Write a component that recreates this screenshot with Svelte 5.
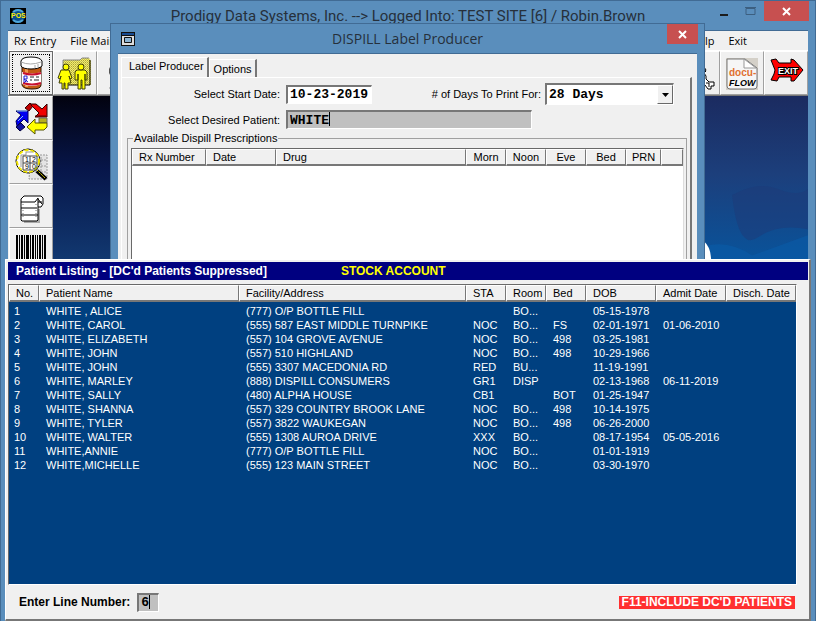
<script lang="ts">
	type Patient = {
		name: string;
		address: string;
		sta?: string;
		room?: string;
		bed?: string;
		dob: string;
		admit?: string;
	};

	const patients: Patient[] = [
		{ name: 'WHITE , ALICE', address: '(777) O/P BOTTLE FILL', room: 'BO...', dob: '05-15-1978' },
		{ name: 'WHITE, CAROL', address: '(555) 587 EAST MIDDLE TURNPIKE', sta: 'NOC', room: 'BO...', bed: 'FS', dob: '02-01-1971', admit: '01-06-2010' },
		{ name: 'WHITE, ELIZABETH', address: '(557) 104 GROVE AVENUE', sta: 'NOC', room: 'BO...', bed: '498', dob: '03-25-1981' },
		{ name: 'WHITE, JOHN', address: '(557) 510 HIGHLAND', sta: 'NOC', room: 'BO...', bed: '498', dob: '10-29-1966' },
		{ name: 'WHITE, JOHN', address: '(555) 3307 MACEDONIA RD', sta: 'RED', room: 'BU...', dob: '11-19-1991' },
		{ name: 'WHITE, MARLEY', address: '(888) DISPILL CONSUMERS', sta: 'GR1', room: 'DISP', dob: '02-13-1968', admit: '06-11-2019' },
		{ name: 'WHITE, SALLY', address: '(480) ALPHA HOUSE', sta: 'CB1', bed: 'BOT', dob: '01-25-1947' },
		{ name: 'WHITE, SHANNA', address: '(557) 329 COUNTRY BROOK LANE', sta: 'NOC', room: 'BO...', bed: '498', dob: '10-14-1975' },
		{ name: 'WHITE, TYLER', address: '(557) 3822 WAUKEGAN', sta: 'NOC', room: 'BO...', bed: '498', dob: '06-26-2000' },
		{ name: 'WHITE, WALTER', address: '(555) 1308 AUROA DRIVE', sta: 'XXX', room: 'BO...', dob: '08-17-1954', admit: '05-05-2016' },
		{ name: 'WHITE,ANNIE', address: '(777) O/P BOTTLE FILL', sta: 'NOC', room: 'BO...', dob: '01-01-1919' },
		{ name: 'WHITE,MICHELLE', address: '(555) 123 MAIN STREET', sta: 'NOC', room: 'BO...', dob: '03-30-1970' }
	];

	const patientHeads = ['No.', 'Patient Name', 'Facility/Address', 'STA', 'Room', 'Bed', 'DOB', 'Admit Date', 'Disch. Date'];
	const rxHeads = ['Rx Number', 'Date', 'Drug', 'Morn', 'Noon', 'Eve', 'Bed', 'PRN', ''];

	// x and width of each bar of the barcode button
	const bars = [[7, 2], [10, 1], [12, 2], [15, 1], [17, 3], [21, 1], [23, 2], [26, 1], [28, 1], [30, 2], [33, 1], [35, 2]];

	let startDate = '10-23-2019';
	let patientName = 'WHITE';
	let lineNumber = '6';
</script>

<main class="app">
	<header class="titlebar mainTitle">
		<svg class="appIcon" width="16" height="16" viewBox="0 0 16 16">
			<rect width="16" height="16" fill="#000" />
			<circle cx="8" cy="8" r="7" fill="#0b4f8f" />
			<path d="M3 4q5-4 10 0M3 12q5 4 10 0" stroke="#4fa6d8" stroke-width="2" fill="none" />
			<text x="1" y="10" class="posText">POS</text>
		</svg>
		<h1>Prodigy Data Systems, Inc. --&gt; Logged Into: TEST SITE [6] / Robin.Brown</h1>
		<div class="controls">
			<button class="min" aria-label="Minimize"><svg width="10" height="12"><rect x="1" y="9" width="8" height="2" fill="#1c1c1c" /></svg></button>
			<button class="max" aria-label="Maximize"><svg width="11" height="12"><path d="M1 3.500h9v6H1z" fill="none" stroke="#3c5f80" /><path d="M0 2.500h11" stroke="#3c5f80" /></svg></button>
			<button class="close" aria-label="Close"><svg width="9" height="9"><path d="M1 1l7 7M8 1l-7 7" stroke="#fff" stroke-width="2" /></svg></button>
		</div>
	</header>

	<div class="client">
		<nav class="menu">
			<a href="#rx">Rx Entry</a>
			<a href="#file">File Main</a>
			<a href="#help" class="help">Help</a>
			<a href="#exit">Exit</a>
		</nav>

		<div class="toolbar">
			<button class="tool active" aria-label="Rx entry">
				<svg viewBox="0 0 43 43">
					<path d="M13 15h19v18q0 4-9 4t-10-4z" fill="#c35a12" stroke="#2a1200" />
					<path d="M16 16h3v19h-3z" fill="#ee9a4e" />
					<path d="M13 20q9 3 19 0v12q-9 4-19 0z" fill="#fff" />
					<path d="M14 21q9 3 18 0M14 31q9 3 18 0" stroke="#c8102e" stroke-width="2" fill="none" />
					<path d="M15 24v6M15 24h3v3h-3l4 3M18 28l-3 3" stroke="#2020d0" fill="none" />
					<path d="M21 25h4M27 25h3M21 28h2M25 28h5" stroke="#222" />
					<path d="M12 9q1-4 10-4t11 4v5q-3 3-11 3t-10-3z" fill="#fff" stroke="#000" />
					<path d="M12 10q9 4 20 0M26 13v3M29 12v3" stroke="#aaa" fill="none" />
				</svg>
			</button>
			<button class="tool" aria-label="Patients">
				<svg viewBox="0 0 43 43">
					<defs>
						<pattern id="dots" width="2" height="2" patternUnits="userSpaceOnUse">
							<rect width="2" height="2" fill="#f4ef6a" /><rect width="1" height="1" fill="#aaa23c" /><rect x="1" y="1" width="1" height="1" fill="#c5be55" />
						</pattern>
					</defs>
					<path d="M10 8h17l2-2h7l2 3v24H10z" fill="url(#dots)" />
					<path d="M10 33V8h17l2-2h7" fill="none" stroke="#888" />
					<path d="M37 8v25H11" fill="none" stroke="#000" />
					<g fill="#ffff00" stroke="#40400a">
						<path d="M11 18h5l3 8-2 1-1-3 2 7h-3v6h-3v-6h-1v6H9v-6H6l2-7-1 3-2-1 3-8z" />
						<circle cx="13" cy="15" r="3" />
						<path d="M24 18h8l2 2v8h-2v-6 15h-3v-9h-1v9h-3V22v6h-3v-8z" />
						<circle cx="28" cy="15" r="3" />
					</g>
				</svg>
			</button>
			<button class="tool" aria-label="Print">
				<svg viewBox="0 0 43 43"><path d="M13 15h20v8H13l-1-2v-4z" fill="#555" /><path d="M12 36h20" stroke="#999" /></svg>
			</button>
			<button class="tool end" aria-label="Support">
				<svg viewBox="0 0 43 43">
					<path d="M22 10h6v5l2 3-2 3 2 3v3l3 3h5v4h-3v3h-3l-3-4-4-2M28 21l2-2M30 31h3v4" fill="#fff" stroke="#000" />
				</svg>
			</button>
			<button class="tool" aria-label="Docu-Flow">
				<svg viewBox="0 0 43 43">
					<path d="M6 6h32v32H6z" fill="#d4d0c8" />
					<path d="M7 7h18l12 9v18q0 3-3 3H10q-3 0-3-3z" fill="#f6f6f6" stroke="#777" />
					<path d="M24 7v9h12z" fill="#fff" stroke="#999" />
					<text x="9" y="24" class="docu">docu-</text>
					<text x="9" y="34" class="flow">FLOW</text>
				</svg>
			</button>
			<button class="tool" aria-label="Exit program">
				<svg viewBox="0 0 43 43">
					<path d="M7 8l5-1 3 4h12V7l3 1 9 10-9 11h-3v-4H15l-2 4-6-1 3-6 1-4z" fill="#f00" stroke="#000" />
					<text x="14" y="22" class="exitText">EXIT</text>
				</svg>
			</button>
		</div>

		<div class="workspace">
			<div class="sidebar">
				<button class="tool" aria-label="Refill">
					<svg viewBox="0 0 43 43">
						<path d="M16 11l5-5 3 3-4 5z" fill="#c00000" stroke="#300" />
						<path d="M22 7h5l6 5 5-5v13H26l4-4-8-8z" fill="#f00000" stroke="#300" />
						<path d="M26 19h11" stroke="#500" />
						<path d="M7 14h12v12l-4-4-7 7-1-5 5-6z" fill="#0000f0" stroke="#000060" />
						<path d="M8 14h10M9 24l5-5" stroke="#8ac4ff" fill="none" />
						<path d="M7 30l5-4 4 4-5 4z" fill="#1010a0" stroke="#000040" />
						<path d="M30 21h8v5h-8z" fill="#b5ae20" stroke="#666" />
						<path d="M18 30l8-8v4h12v4l-3 3h-9v4z" fill="#ffff00" stroke="#555500" />
					</svg>
				</button>
				<button class="tool" aria-label="Search drugs">
					<svg viewBox="0 0 43 43">
						<path d="M22 14h16v24H20zM26 19h12M26 25h12M26 31h12M32 16v21" fill="#e4e4e4" stroke="#999" stroke-dasharray="2 1" />
						<circle cx="19" cy="20" r="12" fill="#fff" stroke="#000" />
						<circle cx="19" cy="20" r="11" fill="none" stroke="#f2e600" stroke-width="2" stroke-dasharray="4 2" />
						<path d="M12 14h5v-3h7M12 14v12" fill="none" stroke="#999" />
						<path d="M14 15h14v14H14zM21 15v14M14 22h14" fill="none" stroke="#444" />
						<text x="16" y="21" class="digits">1</text><text x="23" y="21" class="digits">2</text>
						<text x="16" y="28" class="digits">9</text><text x="23" y="28" class="digits">0</text>
						<path d="M28 30l9 8" stroke="#000" stroke-width="4" />
						<path d="M28 29l8 8" stroke="#fff200" stroke-dasharray="2 1" />
					</svg>
				</button>
				<button class="tool" aria-label="Labels">
					<svg viewBox="0 0 43 43">
						<path d="M15 37h15V24" fill="none" stroke="#aaa" stroke-width="2" />
						<path d="M15 11h17l2 2v6l-2 3h-3v13l-1 1H13l-1-1V14z" fill="#fff" stroke="#000" />
						<path d="M12 17h14l3-4M12 23h16M12 30h17M29 13v9M29 17h4M29 14l4 5" fill="none" stroke="#000" />
						<path d="M14 19v15M27 19v15" stroke="#777" stroke-dasharray="1 2" />
					</svg>
				</button>
				<button class="tool" aria-label="Barcode">
					<svg viewBox="0 0 43 43">
						{#each bars as [x, w]}
							<rect {x} y="6" width={w} height={x % 4 ? 26 : 24} fill="#000" />
						{/each}
					</svg>
				</button>
			</div>
			<svg class="wallpaper" viewBox="0 0 756 520" preserveAspectRatio="none">
				<defs>
					<linearGradient id="night" x2="0" y2="1">
						<stop offset="0" stop-color="#02020f" />
						<stop offset=".14" stop-color="#07164a" />
						<stop offset=".32" stop-color="#123a72" />
					</linearGradient>
					<linearGradient id="sky" x2="0" y2="1">
						<stop offset="0" stop-color="#1b2b60" />
						<stop offset=".15" stop-color="#1c3f7c" />
						<stop offset=".32" stop-color="#08549c" />
					</linearGradient>
				</defs>
				<rect width="400" height="520" fill="url(#night)" />
				<rect x="400" width="356" height="520" fill="url(#sky)" />
				<path d="M680 98q26-14 46-6t30 0v40q-30-6-50 8t-26-42z" fill="#1d3a78" opacity=".5" />
				<path d="M640 154q30-16 60 4l56-20v40H640z" fill="#0a5ca8" opacity=".6" />
				<path d="M640 144h12q7 6 7 20h-19z" fill="#fff" />
			</svg>
		</div>
	</div>

	<section class="dialog">
		<header class="titlebar">
			<svg class="appIcon" width="14" height="14" viewBox="0 0 14 14">
				<path d="M0 0h14v14H0z" fill="#111" /><path d="M1 1h12v2H1z" fill="#174a90" /><path d="M1 4h12v9H1z" fill="#ddd" /><path d="M3.500 5.500h7v5h-7z" fill="#8cb4d4" stroke="#111" />
			</svg>
			<h2>DISPILL Label Producer</h2>
			<div class="controls">
				<button class="close small" aria-label="Close dialog"><svg width="9" height="9"><path d="M1 1l7 7M8 1l-7 7" stroke="#fff" stroke-width="2" /></svg></button>
			</div>
		</header>

		<div class="dialogBody">
			<div class="tabs">
				<button class="tab selected">Label Producer</button>
				<button class="tab">Options</button>
			</div>
			<div class="tabPage">
				<div class="form">
					<label for="start">Select Start Date:</label>
					<div class="formRow">
						<input id="start" class="field date" bind:value={startDate} />
						<label for="days" class="daysLabel"># of Days To Print For:</label>
						<div class="selectBox">
							<select id="days"><option>28 Days</option></select>
							<span class="arrow"><svg width="7" height="4"><path d="M0 0h7L3.500 4z" /></svg></span>
						</div>
					</div>
					<label for="patient">Select Desired Patient:</label>
					<input id="patient" class="field patient" bind:value={patientName} />
				</div>

				<fieldset>
					<legend>Available Dispill Prescriptions</legend>
					<div class="rxList">
						<table>
							<colgroup>
								<col class="w74" /><col class="w70" /><col /><col class="w40" /><col class="w40" /><col class="w40" /><col class="w40" /><col class="w35" /><col class="w22" />
							</colgroup>
							<thead>
								<tr>
									{#each rxHeads as head, i}
										<th class:center={i > 2}>{head}</th>
									{/each}
								</tr>
							</thead>
						</table>
					</div>
				</fieldset>
			</div>
		</div>
	</section>

	<section class="listing">
		<header class="listTitle">
			<h2>Patient Listing - [DC'd Patients Suppressed]</h2>
			<strong>STOCK ACCOUNT</strong>
		</header>
		<div class="patientList">
			<table>
				<colgroup>
					<col class="w30" /><col class="w200" /><col /><col class="w40" /><col class="w40" /><col class="w40" /><col class="w70" /><col class="w70" /><col class="w70" />
				</colgroup>
				<thead>
					<tr>
						{#each patientHeads as head}
							<th>{head}</th>
						{/each}
					</tr>
				</thead>
				<tbody>
					{#each patients as patient, i}
						<tr>
							<td>{i + 1}</td>
							<td>{patient.name}</td>
							<td>{patient.address}</td>
							<td>{patient.sta ?? ''}</td>
							<td>{patient.room ?? ''}</td>
							<td>{patient.bed ?? ''}</td>
							<td>{patient.dob}</td>
							<td>{patient.admit ?? ''}</td>
							<td></td>
						</tr>
					{/each}
				</tbody>
			</table>
		</div>
		<footer>
			<label for="line">Enter Line Number:</label>
			<input id="line" class="field line" bind:value={lineNumber} />
			<button class="include">F11-INCLUDE DC'D PATIENTS</button>
		</footer>
	</section>
</main>

<style>
	:global(body) {
		margin: 0;
	}

	.app {
		position: relative;
		box-sizing: border-box;
		min-height: 100vh;
		display: flex;
		flex-direction: column;
		padding: 0 7px;
		border: 1px solid #416b94;
		border-bottom: 0;
		background: #5a8ebc;
		font: 11px/14px 'Liberation Sans', Arial, sans-serif;
		color: #000;
		overflow: hidden;
	}

	button,
	input,
	select {
		font: inherit;
		color: inherit;
		margin: 0;
		padding: 0;
		border: 0;
		border-radius: 0;
		outline: 0;
		box-sizing: border-box;
	}

	button {
		background: none;
	}

	h1,
	h2 {
		margin: 0;
	}

	svg {
		display: block;
	}

	/* window frames */
	.titlebar {
		height: 29px;
		flex-shrink: 0;
		display: grid;
		grid-template-columns: 1fr auto 1fr;
		align-items: center;
	}

	.titlebar h1,
	.titlebar h2 {
		font: 14px/20px 'Open Sans', 'Noto Sans', sans-serif;
		color: #26303b;
		white-space: nowrap;
	}

	.titlebar h1 {
		font: 15px/20px Roboto, 'Open Sans', sans-serif;
	}

	.appIcon {
		margin-left: 2px;
	}

	.posText {
		font: bold 7px 'Liberation Sans', sans-serif;
		fill: #ffee00;
	}

	.controls {
		align-self: start;
		display: flex;
		justify-content: flex-end;
		align-items: flex-start;
		margin-right: -1px;
	}

	.controls .min,
	.controls .max {
		width: 26px;
		height: 20px;
		display: flex;
		align-items: center;
		justify-content: center;
	}

	.controls .max {
		margin-right: 1px;
	}

	.close {
		width: 45px;
		height: 20px;
		display: flex;
		align-items: center;
		justify-content: center;
		background: #c75050;
	}

	.close.small {
		width: 31px;
	}

	.client {
		flex: 1;
		display: flex;
		flex-direction: column;
		border-top: 1px solid #416b94;
		background: #f0f0f0;
	}

	.menu {
		display: flex;
		align-items: center;
		gap: 14px;
		height: 19px;
		padding: 0 61px 0 6px;
		border-bottom: 1px solid #fff;
		font: 11px/16px 'Open Sans', 'Noto Sans', sans-serif;
	}

	.menu a {
		color: #000;
		text-decoration: none;
	}

	.help {
		margin-left: auto;
	}

	/* tool buttons */
	.toolbar {
		display: flex;
		padding-left: 1px;
		border-bottom: 1px solid #777;
	}

	.tool {
		width: 44px;
		height: 44px;
		flex-shrink: 0;
		background: #f0f0f0;
		border: 1px solid #fff;
		border-right-color: #a0a0a0;
		border-bottom-color: #a0a0a0;
	}

	.tool svg {
		width: 43px;
		height: 43px;
		margin: -1px;
	}

	.tool.active {
		border: 1px solid #696969;
		outline: 1px dotted #000;
		outline-offset: -4px;
	}

	.tool.end {
		margin-left: auto;
	}

	.docu {
		font: bold 10px 'Liberation Sans', sans-serif;
		fill: #e07030;
	}

	.flow {
		font: italic bold 9px 'Liberation Sans', sans-serif;
	}

	.exitText {
		font: bold 9px 'Liberation Sans', sans-serif;
		fill: #fff;
		stroke: #000;
		stroke-width: 2px;
		paint-order: stroke;
	}

	.digits {
		font: 7px 'Liberation Sans', sans-serif;
	}

	.workspace {
		flex: 1;
		display: flex;
	}

	.sidebar {
		display: flex;
		flex-direction: column;
		flex-shrink: 0;
		padding-left: 1px;
		background: #f0f0f0;
	}

	.wallpaper {
		flex: 1;
		width: 0;
		min-height: 520px;
	}

	/* the two windows floating over the workspace */
	.dialog {
		position: absolute;
		top: 22px;
		left: 109px;
		right: 110px;
		bottom: 60px;
		display: flex;
		flex-direction: column;
		padding: 0 7px;
		border: 1px solid #416b94;
		background: #5a8ebc;
	}

	.dialog .appIcon {
		margin-left: 3px;
	}

	.dialogBody {
		flex: 1;
		display: flex;
		flex-direction: column;
		padding: 3px 5px 4px 3px;
		border-top: 1px solid #416b94;
		background: #f0f0f0;
	}

	.tabs {
		display: flex;
		align-items: flex-end;
	}

	.tab {
		height: 18px;
		padding: 0 3px 0 4px;
		border: 1px solid #fff;
		border-right: 2px solid #777;
		border-bottom: 0;
	}

	.tab.selected {
		height: 20px;
		padding: 0 3px 3px 7px;
	}

	.tabPage {
		flex: 1;
		display: flex;
		flex-direction: column;
		padding: 5px 3px 4px 5px;
		border: 1px solid #fff;
		border-right: 2px solid #777;
	}

	.form {
		display: grid;
		grid-template-columns: 153px 1fr;
		column-gap: 6px;
		row-gap: 5px;
		align-items: center;
	}

	.form label {
		text-align: right;
		white-space: nowrap;
	}

	.formRow {
		display: flex;
		align-items: center;
	}

	.daysLabel {
		width: 169px;
		margin-right: 4px;
	}

	.field,
	.selectBox {
		border: 2px solid #777;
		border-right: 1px solid #fff;
		border-bottom: 1px solid #fff;
		background-color: #fff;
		font: bold 13px/16px 'Liberation Mono', monospace;
	}

	.field {
		height: 19px;
		padding-left: 2px;
	}

	.date {
		width: 86px;
	}

	.patient {
		width: 246px;
	}

	.patient,
	.line {
		background: #c0c0c0 linear-gradient(#000, #000) no-repeat 41px 0 / 1px 14px;
	}

	.selectBox {
		box-sizing: border-box;
		display: flex;
		width: 129px;
		height: 22px;
	}

	.selectBox select {
		appearance: none;
		flex: 1;
		width: 0;
		padding-left: 2px;
		background: #fff;
	}

	.arrow {
		display: flex;
		width: 14px;
		align-items: center;
		justify-content: center;
		border: 1px solid #fff;
		border-right-color: #696969;
		border-bottom-color: #696969;
		background: #f0f0f0;
	}

	fieldset {
		flex: 1;
		display: flex;
		flex-direction: column;
		min-width: 0;
		margin: 2px 0 0;
		padding: 3px 2px 3px 3px;
		border: 1px solid #a0a0a0;
	}

	legend {
		margin-left: 2px;
		padding: 0 1px;
		height: 14px;
	}

	.rxList {
		flex: 1;
		border: 1px solid #696969;
		border-right-color: #ddd;
		background: #fff;
	}

	/* list views */
	table {
		width: 100%;
		table-layout: fixed;
		border-collapse: separate;
		border-spacing: 0;
	}

	th {
		height: 14px;
		padding: 0 0 0 6px;
		border: 1px solid #fff;
		border-right-color: #777;
		border-bottom: 2px solid #777;
		background: #f0f0f0;
		color: #000;
		font-weight: normal;
		text-align: left;
		white-space: nowrap;
	}

	th.center {
		padding: 0;
		text-align: center;
	}

	td {
		height: 14px;
		padding: 0 0 0 7px;
		white-space: nowrap;
	}

	td:first-child {
		padding-left: 5px;
	}

	.w22 { width: 22px; }
	.w30 { width: 30px; }
	.w35 { width: 35px; }
	.w40 { width: 40px; }
	.w70 { width: 70px; }
	.w74 { width: 74px; }
	.w200 { width: 200px; }

	.listing {
		position: absolute;
		top: 258px;
		left: 4px;
		right: 4px;
		bottom: 0;
		display: flex;
		flex-direction: column;
		padding: 2px 1px 0;
		border: 1px solid #fff;
		border-right: 2px solid #777;
		border-bottom: 2px solid #777;
		background: #f0f0f0;
	}

	.listTitle {
		display: flex;
		gap: 74px;
		height: 18px;
		margin: 0 0 4px 1px;
		padding-left: 8px;
		background: #000080;
		color: #fff;
		font: bold 12px/18px 'Liberation Sans', Arial, sans-serif;
		white-space: nowrap;
	}

	.listTitle h2 {
		font: inherit;
	}

	.listTitle strong {
		color: #ff0;
	}

	.patientList {
		flex: 1;
		margin: 0 11px 0 1px;
		border: 1px solid #696969;
		border-right-color: #fff;
		border-bottom-color: #fff;
		background: #004080;
		color: #fff;
	}

	.patientList tbody::before {
		content: '';
		display: block;
		height: 2px;
	}

	footer {
		display: flex;
		align-items: center;
		height: 34px;
		padding: 0 13px 0 12px;
		font-weight: bold;
		font-size: 12px;
	}

	.line {
		width: 22px;
		margin-left: 7px;
		background-position: 10px 0;
	}

	.include {
		height: 13px;
		margin-left: auto;
		padding: 0 3px;
		background: #ff3030;
		color: #fff;
		line-height: 13px;
		white-space: nowrap;
	}
</style>
